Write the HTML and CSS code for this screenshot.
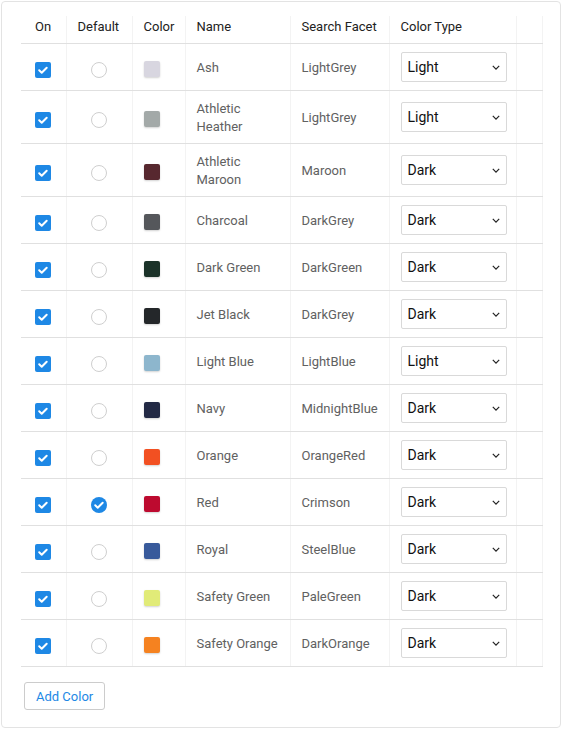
FILE: index.html
```html
<!DOCTYPE html>
<html lang="en">
<head>
    <meta charset="UTF-8">
    <meta name="viewport" content="width=device-width, initial-scale=1.0">
    <title>Product Colors</title>
    <link rel="stylesheet" href="styles.css">
</head>
<body>

    <div class="card">
        <table class="color-table">
            <colgroup>
                <col style="width: 45px">
                <col style="width: 66px">
                <col style="width: 53px">
                <col style="width: 105px">
                <col style="width: 99px">
                <col style="width: 127px">
                <col style="width: 26px">
            </colgroup>
            <thead>
                <tr>
                    <th>On</th>
                    <th>Default</th>
                    <th>Color</th>
                    <th>Name</th>
                    <th>Search Facet</th>
                    <th>Color Type</th>
                    <th></th>
                </tr>
            </thead>
            <tbody id="rows"></tbody>
        </table>

        <button class="add-button">Add Color</button>
    </div>

    <script>
        // color rows
        var colors = [
            ['Ash', '#d8d6e0', 'LightGrey', 'Light'],
            ['Athletic Heather', '#a3a9a8', 'LightGrey', 'Light'],
            ['Athletic Maroon', '#57282f', 'Maroon', 'Dark'],
            ['Charcoal', '#55575b', 'DarkGrey', 'Dark'],
            ['Dark Green', '#1b3229', 'DarkGreen', 'Dark'],
            ['Jet Black', '#24272a', 'DarkGrey', 'Dark'],
            ['Light Blue', '#8db6cd', 'LightBlue', 'Light'],
            ['Navy', '#232a45', 'MidnightBlue', 'Dark'],
            ['Orange', '#f25022', 'OrangeRed', 'Dark'],
            ['Red', '#bd0a2f', 'Crimson', 'Dark'],
            ['Royal', '#385a9b', 'SteelBlue', 'Dark'],
            ['Safety Green', '#e1eb78', 'PaleGreen', 'Dark'],
            ['Safety Orange', '#f58220', 'DarkOrange', 'Dark']
        ];

        var check = '<svg viewBox="0 0 16 16" width="16" height="16"><path d="M4.2 8.3l2.5 2.4 5-5" fill="none" stroke="#fff" stroke-width="2" stroke-linecap="round" stroke-linejoin="round"/></svg>';
        var chevron = '<svg class="chevron" viewBox="0 0 10 6" width="8" height="5"><path d="M1 1l4 4 4-4" fill="none" stroke="#222" stroke-width="1.5"/></svg>';

        var html = '';
        colors.forEach(function (c) {
            var isDefault = c[0] === 'Red';
            html += '<tr>' +
                '<td><span class="checkbox">' + check + '</span></td>' +
                '<td class="center">' + (isDefault ? '<span class="radio checked">' + check + '</span>' : '<span class="radio"></span>') + '</td>' +
                '<td><span class="swatch" style="background:' + c[1] + '"></span></td>' +
                '<td class="name">' + c[0] + '</td>' +
                '<td class="facet">' + c[2] + '</td>' +
                '<td><div class="select-wrap"><select class="select">' +
                    '<option' + (c[3] === 'Light' ? ' selected' : '') + '>Light</option>' +
                    '<option' + (c[3] === 'Dark' ? ' selected' : '') + '>Dark</option>' +
                '</select>' + chevron + '</div></td>' +
                '<td></td>' +
                '</tr>';
        });
        document.getElementById('rows').innerHTML = html;
    </script>

</body>
</html>
```

FILE: styles.css
```css
body {
    margin: 0;
    padding: 1px 1px 0 1px;
    font-family: Roboto, "Liberation Sans", sans-serif;
    background-color: #fff;
}

.card {
    width: 560px;
    box-sizing: border-box;
    border: 1px solid #e3e3e3;
    border-radius: 4px;
    padding: 14px 19px 17px 19px;
    background: #fff;
}

.color-table {
    width: 521px;
    table-layout: fixed;
    border-collapse: collapse;
    font-size: 13px;
}

.color-table th {
    text-align: left;
    font-weight: 400;
    color: #222;
    line-height: 18px;
    padding: 2px 8px 7px 11px;
    border-bottom: 1px solid #e0e0e0;
}

.color-table td {
    padding: 8px 8px 8px 11px;
    line-height: 18px;
    vertical-align: middle;
    border-bottom: 1px solid #e0e0e0;
}

/* faint column lines */
.color-table th + th,
.color-table td + td {
    border-left: 1px solid #f3f3f3;
}

.color-table th:last-child,
.color-table td:last-child {
    border-right: 1px solid #f3f3f3;
}

.color-table th:first-child,
.color-table td:first-child {
    padding-left: 14px;
}

.color-table td.center {
    padding-left: 24px;
}

/* text sits a pixel lower than the controls */
.color-table td.name,
.color-table td.facet {
    color: #616161;
    padding-top: 9px;
    padding-bottom: 7px;
}

.checkbox,
.radio,
.swatch {
    display: block;
    width: 16px;
    height: 16px;
    box-sizing: border-box;
    margin-top: 5px;
}

.checkbox {
    background-color: #1e88e5;
    border-radius: 2px;
}

.checkbox svg,
.radio svg {
    display: block;
}

.radio {
    border: 1px solid #cfcfcf;
    border-radius: 50%;
}

.radio.checked {
    border: none;
    background-color: #1e88e5;
}

.swatch {
    margin-top: 3px;
    border-radius: 2px;
    box-shadow: 0 1px 2px rgba(0, 0, 0, 0.18);
}

.select-wrap {
    position: relative;
    width: 106px;
}

.select {
    display: block;
    width: 106px;
    height: 30px;
    margin: 0;
    padding: 0 20px 0 6px;
    appearance: none;
    -webkit-appearance: none;
    border: 1px solid #d9d9d9;
    border-radius: 2px;
    background: #fff;
    font-family: Roboto, "Liberation Sans", sans-serif;
    font-size: 14px;
    color: #111;
}

.chevron {
    position: absolute;
    right: 7px;
    top: 13px;
    pointer-events: none;
}

.add-button {
    display: block;
    margin: 15px 0 0 3px;
    height: 28px;
    padding: 0 11px;
    border: 1px solid #cccccc;
    border-radius: 3px;
    background: #fff;
    color: #1e88e5;
    font-family: Roboto, "Liberation Sans", sans-serif;
    font-size: 13px;
    cursor: pointer;
}
```
